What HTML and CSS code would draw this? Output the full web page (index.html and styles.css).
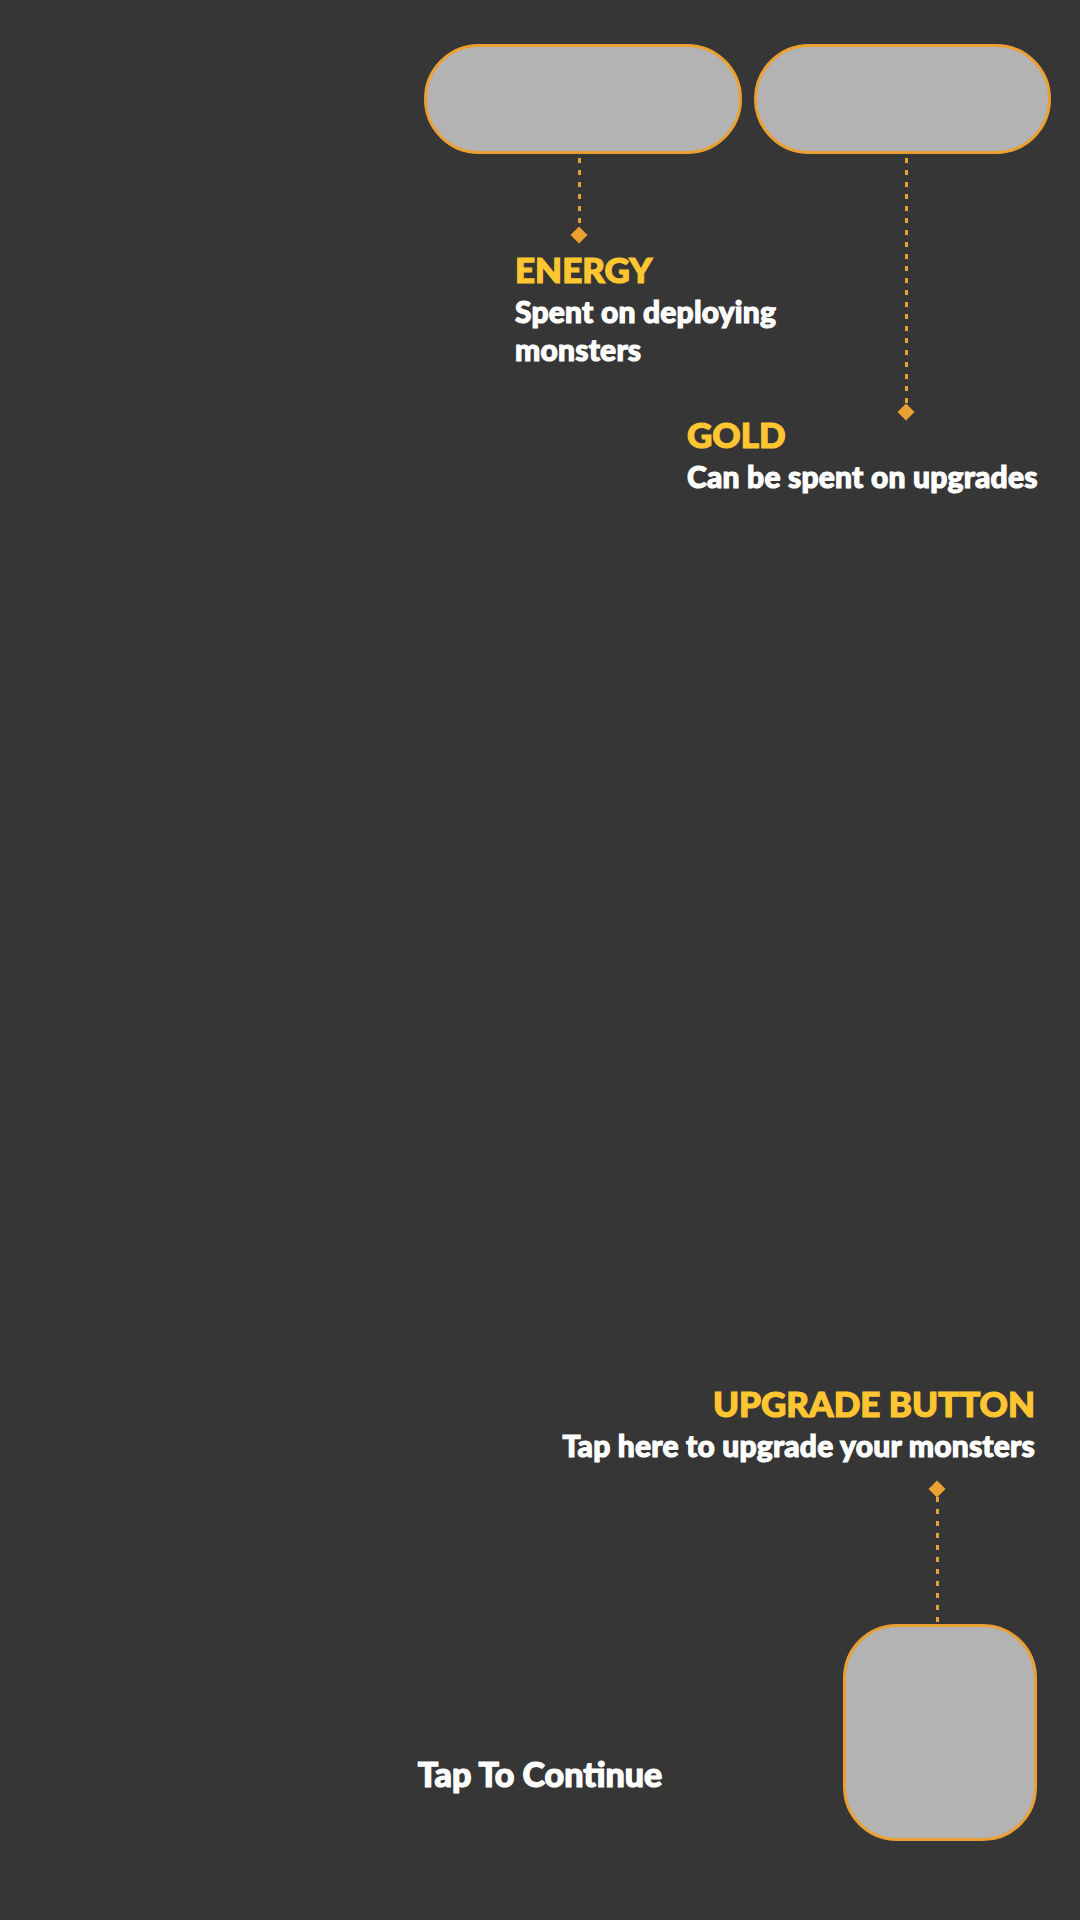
FILE: index.html
```html
<!DOCTYPE html>
<html lang="en">
<head>
<meta charset="utf-8">
<title>Tutorial</title>
<link rel="stylesheet" href="styles.css">
</head>
<body>
<div class="screen">
  <header class="topbar">
    <div class="pill pill-energy">
      <div class="callout callout-energy">
        <span class="leader leader-energy"></span>
        <span class="diamond diamond-energy"></span>
        <div class="label label-energy">
          <div class="label-title">ENERGY</div>
          <div class="label-text">Spent on deploying monsters</div>
        </div>
      </div>
    </div>
    <div class="pill pill-gold">
      <div class="callout callout-gold">
        <span class="leader leader-gold"></span>
        <span class="diamond diamond-gold"></span>
        <div class="label label-gold">
          <div class="label-title">GOLD</div>
          <div class="label-text">Can be spent on upgrades</div>
        </div>
      </div>
    </div>
  </header>

  <footer class="bottombar">
    <div class="continue">Tap To Continue</div>
    <div class="upgrade-btn">
      <div class="callout callout-upgrade">
        <div class="label label-upgrade">
          <div class="label-title">UPGRADE BUTTON</div>
          <div class="label-text">Tap here to upgrade your monsters</div>
        </div>
        <span class="diamond diamond-upgrade"></span>
        <span class="leader leader-upgrade"></span>
      </div>
    </div>
  </footer>
</div>
</body>
</html>
```
FILE: styles.css
```css
html, body {
  margin: 0;
  padding: 0;
  background: #363636;
}

body {
  font-family: Lato, "Open Sans", "DejaVu Sans", sans-serif;
  font-weight: 900;
  color: #ffffff;
}

.screen {
  width: 1080px;
  height: 1920px;
  display: flex;
  flex-direction: column;
  justify-content: space-between;
  box-sizing: border-box;
  padding: 44px 0 79px 0;
}

.topbar {
  display: flex;
  justify-content: flex-end;
  gap: 12px;
  padding-right: 29px;
}

.pill {
  position: relative;
  height: 110px;
  box-sizing: border-box;
  background: #b3b3b3;
  border: 3px solid #eba034;
  border-radius: 55px;
}

.pill-energy { width: 318px; }
.pill-gold { width: 297px; }

.callout {
  position: absolute;
  display: flex;
  flex-direction: column;
  align-items: flex-start;
}

.callout-energy {
  top: calc(100% + 7px);
  left: 88px;
}

.callout-gold {
  top: calc(100% + 7px);
  left: -70px;
}

.leader {
  display: block;
  width: 3px;
  background: repeating-linear-gradient(to bottom, #eba034 0 5px, transparent 5px 12px);
}

.diamond {
  display: block;
  width: 12px;
  height: 12px;
  background: #eba034;
  transform: rotate(45deg);
}

.leader-energy { height: 70px; margin-left: 63px; }
.diamond-energy { margin-left: 58px; margin-top: 1px; }
.label-energy { margin-top: 8px; width: 290px; }

.leader-gold { height: 247px; margin-left: 218px; }
.diamond-gold { margin-left: 213px; margin-top: 1px; }
.label-gold { margin-top: -4px; white-space: nowrap; }

.label-title {
  font-size: 35px;
  line-height: 40px;
  color: #ffc632;
  -webkit-text-stroke: 1.2px #ffc632;
}

.label-text {
  margin-top: 3px;
  font-size: 30px;
  line-height: 38px;
  letter-spacing: 0.2px;
  color: #ffffff;
  -webkit-text-stroke: 1.1px #ffffff;
}

.bottombar {
  display: grid;
  grid-template-columns: 1fr auto 1fr;
  align-items: end;
}

.continue {
  grid-column: 2;
  font-size: 34px;
  line-height: 40px;
  margin-bottom: 47px;
  white-space: nowrap;
  -webkit-text-stroke: 1.2px #ffffff;
}

.upgrade-btn {
  grid-column: 3;
  justify-self: end;
  margin-right: 43px;
  position: relative;
  width: 194px;
  height: 217px;
  box-sizing: border-box;
  background: #b3b3b3;
  border: 3px solid #eba034;
  border-radius: 54px;
}

.callout-upgrade {
  bottom: calc(100% + 3px);
  right: -1px;
  align-items: flex-end;
}

.label-upgrade {
  text-align: right;
  white-space: nowrap;
}

.diamond-upgrade { margin-top: 19px; margin-right: 92px; }
.leader-upgrade { margin-top: 2px; height: 127px; margin-right: 96px; }
```
